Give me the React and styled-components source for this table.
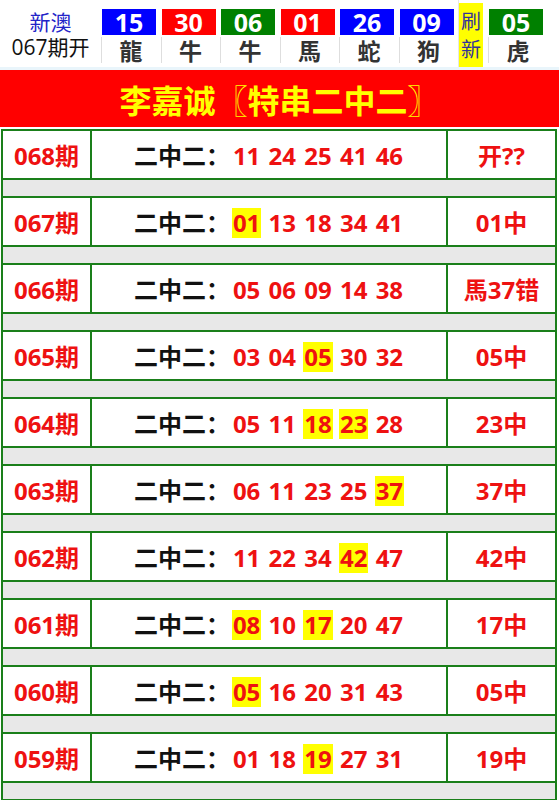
import React from "react";
import styled, { createGlobalStyle } from "styled-components";

const GlobalStyle = createGlobalStyle`
  body {
    margin: 0;
    background: #fff;
    font-family: "Open Sans", "Noto Sans CJK SC", sans-serif;
  }
`;

const Header = styled.div`
  display: flex;
  align-items: stretch;
  height: 67px;
  border-bottom: 3px solid #e9f5fb;
`;

const IssueCell = styled.div`
  width: 101px;
  display: flex;
  flex-direction: column;
  align-items: center;
  justify-content: center;
  font-family: "Noto Sans CJK SC", sans-serif;
  font-size: 21px;
  line-height: 26px;
`;

const Brand = styled.span`
  color: #2323c8;
`;

const Issue = styled.span`
  color: #111;
  font-family: "Open Sans", "Noto Sans CJK SC", sans-serif;
`;

const BallCell = styled.div`
  width: 59.5px;
  padding-top: 9px;
  display: flex;
  flex-direction: column;
  align-items: flex-start;
`;

const Ball = styled.div`
  width: 54px;
  height: 26px;
  margin-left: 1px;
  background: ${(p) => p.$bg};
  color: #fff;
  font-weight: 700;
  font-size: 25px;
  line-height: 26px;
  text-align: center;
`;

const Animal = styled.div`
  width: 58px;
  height: 26px;
  margin-top: 2px;
  border-left: 1px solid #dedede;
  color: #333;
  font-family: "Noto Sans CJK SC", sans-serif;
  font-weight: 700;
  font-size: 23px;
  line-height: 26px;
  text-align: center;
  padding-right: 4px;
`;

const RefreshCell = styled.div`
  width: 29px;
  padding-top: 3px;
  border-left: 1px solid #e6e6e6;
`;

const Refresh = styled.div`
  width: 24px;
  height: 64px;
  background: #ffff00;
  color: #33339a;
  font-family: "Noto Sans CJK SC", sans-serif;
  font-size: 20px;
  line-height: 28px;
  display: flex;
  flex-direction: column;
  align-items: center;
  justify-content: center;
`;

const Banner = styled.div`
  height: 57px;
  background: #ff0000;
  color: #ffff00;
  font-family: "Noto Sans CJK SC", sans-serif;
  font-weight: 700;
  font-size: 32px;
  display: flex;
  align-items: center;
  justify-content: center;
`;

const Table = styled.table`
  width: 556px;
  margin: 2px 0 0 1px;
  border-collapse: collapse;
  font-weight: 700;
  font-size: 24px;
`;

const Cell = styled.td`
  border: 2px solid #1a7f1a;
  height: 47px;
  padding: 0;
  text-align: center;
  color: #ee1111;
  width: ${(p) => p.$w || "auto"};
`;

const Spacer = styled.td`
  border: 2px solid #1a7f1a;
  height: 16px;
  padding: 0;
  background: #e8e8e8;
`;

const Label = styled.span`
  color: #111;
  font-family: "Noto Sans CJK SC", sans-serif;
  margin-right: 2px;
`;

const Num = styled.span`
  display: inline-block;
  line-height: 30px;
  color: #ee1111;
  background: ${(p) => (p.$hit ? "#ffff00" : "transparent")};
  padding: 0 1px;
`;

const Cjk = styled.span`
  font-family: "Noto Sans CJK SC", sans-serif;
`;

const balls = [
  { n: "15", bg: "#0000ff", a: "龍" },
  { n: "30", bg: "#ff0000", a: "牛" },
  { n: "06", bg: "#008000", a: "牛" },
  { n: "01", bg: "#ff0000", a: "馬" },
  { n: "26", bg: "#0000ff", a: "蛇" },
  { n: "09", bg: "#0000ff", a: "狗" },
];

const rows = [
  { p: "068", nums: ["11", "24", "25", "41", "46"], hits: [], r: "开??" },
  { p: "067", nums: ["01", "13", "18", "34", "41"], hits: ["01"], r: "01中" },
  { p: "066", nums: ["05", "06", "09", "14", "38"], hits: [], r: "馬37错" },
  { p: "065", nums: ["03", "04", "05", "30", "32"], hits: ["05"], r: "05中" },
  { p: "064", nums: ["05", "11", "18", "23", "28"], hits: ["18", "23"], r: "23中" },
  { p: "063", nums: ["06", "11", "23", "25", "37"], hits: ["37"], r: "37中" },
  { p: "062", nums: ["11", "22", "34", "42", "47"], hits: ["42"], r: "42中" },
  { p: "061", nums: ["08", "10", "17", "20", "47"], hits: ["08", "17"], r: "17中" },
  { p: "060", nums: ["05", "16", "20", "31", "43"], hits: ["05"], r: "05中" },
  { p: "059", nums: ["01", "18", "19", "27", "31"], hits: ["19"], r: "19中" },
];

// split "05中" style text so digits use the latin font
const mixed = (s) =>
  s.split(/([^0-9?]+)/).filter(Boolean).map((part, i) =>
    /[0-9?]/.test(part) ? <span key={i}>{part}</span> : <Cjk key={i}>{part}</Cjk>
  );

const App = () => {
  return (
    <>
      <GlobalStyle />
      <Header>
        <IssueCell>
          <Brand>新澳</Brand>
          <Issue>067期开</Issue>
        </IssueCell>
        {balls.map((b, i) => (
          <BallCell key={i}>
            <Ball $bg={b.bg}>{b.n}</Ball>
            <Animal>{b.a}</Animal>
          </BallCell>
        ))}
        <RefreshCell>
          <Refresh>
            <span>刷</span>
            <span>新</span>
          </Refresh>
        </RefreshCell>
        <BallCell>
          <Ball $bg="#008000">05</Ball>
          <Animal>虎</Animal>
        </BallCell>
      </Header>
      <Banner>李嘉诚〖特串二中二〗</Banner>
      <Table>
        <tbody>
          {rows.map((row) => (
            <React.Fragment key={row.p}>
              <tr>
                <Cell $w="87px">{mixed(row.p + "期")}</Cell>
                <Cell>
                  <Label>二中二：</Label>
                  {row.nums.map((n, i) => (
                    <React.Fragment key={i}>
                      {i > 0 && " "}
                      <Num $hit={row.hits.includes(n)}>{n}</Num>
                    </React.Fragment>
                  ))}
                </Cell>
                <Cell $w="107px">{mixed(row.r)}</Cell>
              </tr>
              <tr>
                <Spacer colSpan={3} />
              </tr>
            </React.Fragment>
          ))}
        </tbody>
      </Table>
    </>
  );
};

export default App;
